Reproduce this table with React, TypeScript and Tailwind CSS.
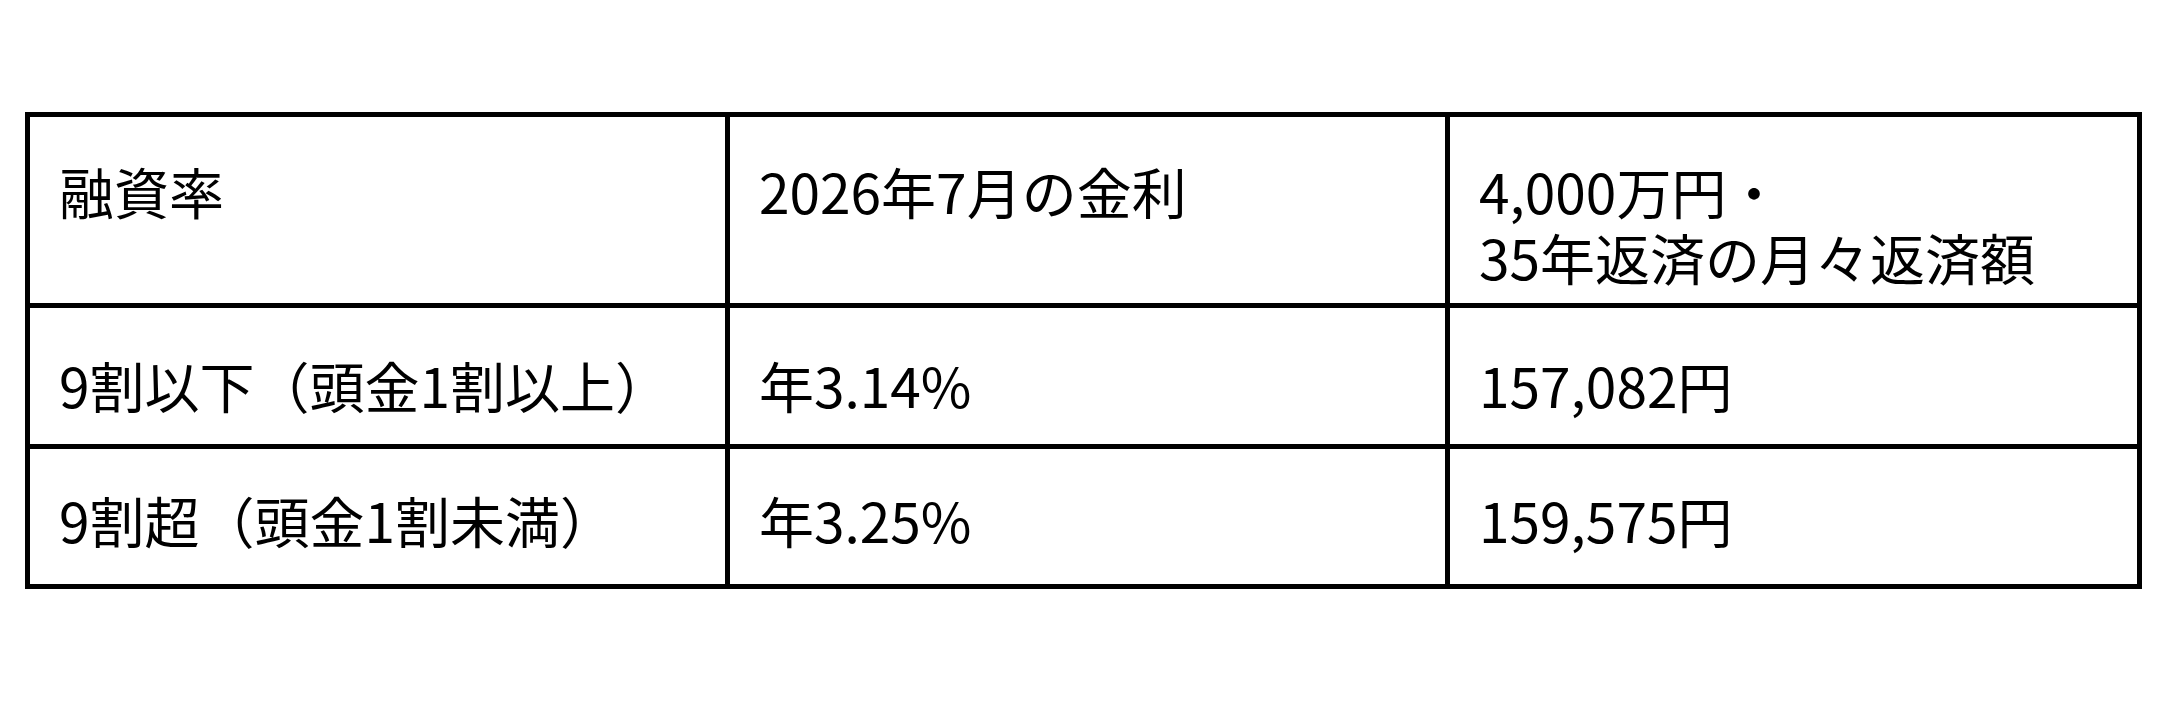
const rows = [
  { rate: '9割以下（頭金1割以上）', interest: '年3.14%', payment: '157,082円', pad: 'pt-[43px] pb-[27px]' },
  { rate: '9割超（頭金1割未満）', interest: '年3.25%', payment: '159,575円', pad: 'pt-[37px] pb-[32px]' },
]

export default function App() {
  const cell = 'border-r-[5px] border-b-[5px] border-black align-top pl-[29px]'

  return (
    <div className="min-h-screen bg-white pt-[112px] pl-[25px]">
      <table className="table-fixed border-separate border-spacing-0 w-[2117px] border-l-[5px] border-t-[5px] border-black text-[55px] leading-[66px] text-black font-['Noto_Sans_CJK_JP','Noto_Sans',sans-serif]">
        <colgroup>
          <col className="w-[700px]" />
          <col className="w-[720px]" />
          <col className="w-[692px]" />
        </colgroup>
        <tbody>
          <tr>
            <td className={`${cell} pt-[40px] pb-[14px]`}>融資率</td>
            <td className={`${cell} pt-[40px] pb-[14px]`}>2026年7月の金利</td>
            <td className={`${cell} pt-[40px] pb-[14px]`}>
              <div>4,000万円・</div>
              <div>35年返済の月々返済額</div>
            </td>
          </tr>
          {rows.map((row) => (
            <tr key={row.rate}>
              <td className={`${cell} ${row.pad}`}>{row.rate}</td>
              <td className={`${cell} ${row.pad}`}>{row.interest}</td>
              <td className={`${cell} ${row.pad}`}>{row.payment}</td>
            </tr>
          ))}
        </tbody>
      </table>
    </div>
  )
}
